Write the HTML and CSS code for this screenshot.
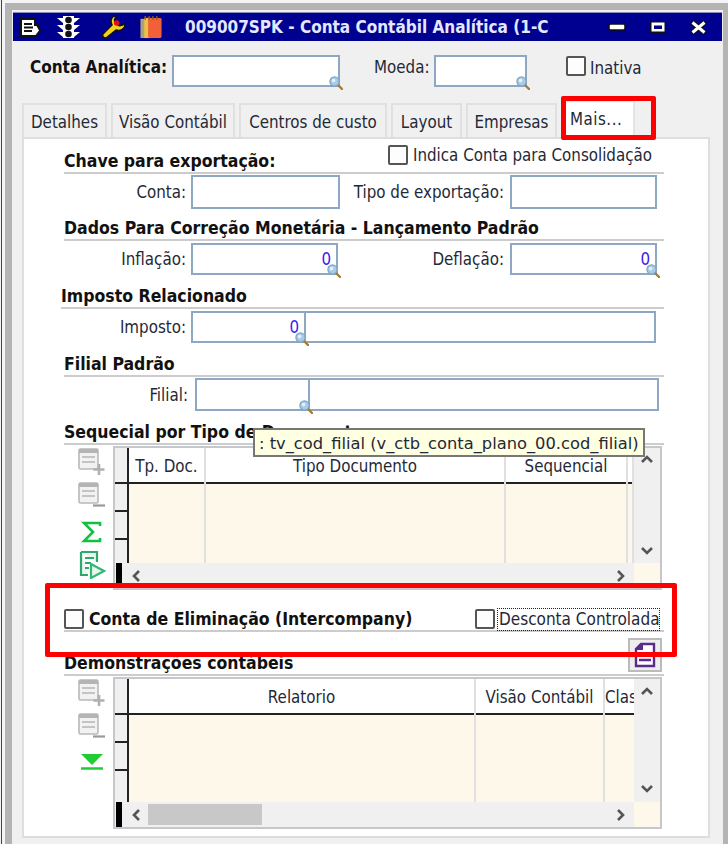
FILE: index.html
```html
<!DOCTYPE html>
<html lang="pt">
<head>
<meta charset="utf-8">
<title>Conta Contábil Analítica</title>
<link rel="stylesheet" href="styles.css">
</head>
<body>
<svg class="defs" width="0" height="0" aria-hidden="true">
  <symbol id="mag" viewBox="0 0 14 14">
    <path d="M8 8l5 5" stroke="#a67c32" stroke-width="2.4" stroke-linecap="round"/>
    <circle cx="5.5" cy="5.5" r="4.6" fill="#a9cbe8" stroke="#7ea3c4" stroke-width="1.2"/>
    <circle cx="4.6" cy="4.6" r="1.8" fill="#e4f1fb"/>
  </symbol>
  <symbol id="doc-add" viewBox="0 0 28 28">
    <rect x="1" y="1" width="19" height="20" rx="1.5" fill="#f2f2f2" stroke="#b9b9b9" stroke-width="1.6"/>
    <rect x="1" y="1" width="19" height="4" fill="#b4b4b4"/>
    <path d="M4 9h13M4 14h13" stroke="#c4c4c4" stroke-width="1.8"/>
    <path d="M21 16v11M15.500 21.500h11" stroke="#b0b0b0" stroke-width="2.6"/>
  </symbol>
  <symbol id="doc-del" viewBox="0 0 28 28">
    <rect x="1" y="1" width="19" height="20" rx="1.5" fill="#f2f2f2" stroke="#b9b9b9" stroke-width="1.6"/>
    <rect x="1" y="1" width="19" height="4" fill="#b4b4b4"/>
    <path d="M4 9h13M4 14h13" stroke="#c4c4c4" stroke-width="1.8"/>
    <path d="M15 23.500h12" stroke="#9a9a9a" stroke-width="2.2"/>
  </symbol>
</svg>
<div class="stage">
  <div class="shell">
    <div class="window">
      <header class="titlebar">
        <svg class="ti ti-export" viewBox="0 0 24 24"><path d="M2 3h16v6h2l3 6.500-5 6.500H2z" fill="#111"/><path d="M4 5h12v6h2.500l2.500 4.500-3.500 4.500H4z" fill="#fff"/><path d="M6 9h8M6 12.500h9M6 16h8" stroke="#111" stroke-width="1.8"/></svg>
        <svg class="ti ti-light" viewBox="0 0 25 24"><path d="M7 1h11v22H7zM1 3h6l0 5zM24 3h-6v5zM1 10h6v5zM24 10h-6v5zM1 17h6v5zM24 17h-6v5z" fill="#fff"/><circle cx="12.500" cy="5" r="3.300" fill="#111"/><circle cx="12.500" cy="12" r="3.300" fill="#111"/><circle cx="12.500" cy="19" r="3.300" fill="#111"/></svg>
        <svg class="ti ti-wrench" viewBox="0 0 25 24"><path d="M13 1c-3 2-4 6-2 9L2 19c-1 2 0 4 3 4l10-8c3 1 7 0 9-4l-1-2c-2 2-5 2-6 1l-3-3c-1-2 0-4 1-5z" fill="#f2d21a" stroke="#111" stroke-width="1.500"/><circle cx="15.700" cy="8" r="2.800" fill="#e01010"/></svg>
        <svg class="ti ti-book" viewBox="0 0 24 25"><rect x="1" y="4" width="7" height="20" fill="#a9a27c"/><rect x="5" y="3" width="7" height="21" fill="#f2c040"/><rect x="9" y="3" width="14" height="21" rx="1.500" fill="#f2603a"/><path d="M6 1v4M10 1v4M14 1v4M18 1v4" stroke="#8a5a20" stroke-width="1.500"/></svg>
        <span class="title-text">009007SPK - Conta Contábil Analítica (1-Conta</span>
        <svg class="wc wc-min" viewBox="0 0 18 8"><rect x="1" y="1" width="16" height="6" rx="1.500" fill="#fff" stroke="#111" stroke-width="1.500"/></svg>
        <svg class="wc wc-max" viewBox="0 0 18 14"><rect x="1" y="1" width="16" height="12" rx="1.500" fill="#111"/><rect x="2.500" y="2.500" width="13" height="9" fill="#fff"/><rect x="5" y="5.500" width="8" height="3.500" fill="#000090"/></svg>
        <svg class="wc wc-close" viewBox="0 0 17 15"><path d="M2 2l13 11M15 2L2 13" stroke="#111" stroke-width="5"/><path d="M2.500 2.500l12 10M14.500 2.500l-12 10" stroke="#fff" stroke-width="3"/></svg>
      </header>

      <div class="head">
        <span class="lbl-main">Conta Analítica:</span>
        <div class="inp inp-conta"><svg class="mag"><use href="#mag"/></svg></div>
        <span class="lbl lbl-moeda">Moeda:</span>
        <div class="inp inp-moeda"><svg class="mag"><use href="#mag"/></svg></div>
        <span class="cb cb-inativa"></span>
        <span class="lbl lbl-inativa">Inativa</span>
      </div>

      <nav class="tabs">
        <span class="tab tab-1">Detalhes</span>
        <span class="tab tab-2">Visão Contábil</span>
        <span class="tab tab-3">Centros de custo</span>
        <span class="tab tab-4">Layout</span>
        <span class="tab tab-5">Empresas</span>
        <span class="tab tab-6 active">Mais...</span>
      </nav>

      <main class="panel">
        <div class="sec-head h-35">
          <span class="sec-title">Chave para exportação:</span>
          <span class="check-inline"><span class="cb"></span><span class="lbl">Indica Conta para Consolidação</span></span>
        </div>
        <div class="row r-1">
          <span class="lbl rl w-122">Conta:</span>
          <div class="inp w-149"></div>
          <span class="lbl rl w-164">Tipo de exportação:</span>
          <div class="inp w-147"></div>
        </div>

        <div class="sec-head h-32"><span class="sec-title">Dados Para Correção Monetária - Lançamento Padrão</span></div>
        <div class="row r-2">
          <span class="lbl rl w-122">Inflação:</span>
          <div class="inp w-147 num"><span class="val">0</span><svg class="mag"><use href="#mag"/></svg></div>
          <span class="lbl rl w-166">Deflação:</span>
          <div class="inp w-147 num"><span class="val">0</span><svg class="mag"><use href="#mag"/></svg></div>
        </div>

        <div class="sec-head h-34 shift"><span class="sec-title">Imposto Relacionado</span></div>
        <div class="row r-2">
          <span class="lbl rl w-122">Imposto:</span>
          <div class="inp w-465 split"><div class="seg num"><span class="val">0</span><svg class="mag"><use href="#mag"/></svg></div></div>
        </div>

        <div class="sec-head h-34"><span class="sec-title">Filial Padrão</span></div>
        <div class="row r-3">
          <span class="lbl rl w-126">Filial:</span>
          <div class="inp w-464 split"><div class="seg"><svg class="mag"><use href="#mag"/></svg></div></div>
        </div>

        <div class="sec-head h-34"><span class="sec-title">Sequecial por Tipo de Documento</span></div>
        <div class="grid-row">
          <div class="tools">
            <svg class="tool"><use href="#doc-add"/></svg>
            <svg class="tool"><use href="#doc-del"/></svg>
            <svg class="tool tool-sum" viewBox="0 0 22 22"><path d="M19 5V2H3l9 9-9 9h16v-3" fill="none" stroke="#12c040" stroke-width="2.600"/></svg>
            <svg class="tool" viewBox="0 0 28 28"><path d="M3 1h16v10M10 24H3V1" fill="#e8f6ee" stroke="#2fa870" stroke-width="2.200"/><path d="M7 7h9M7 12h6M7 17h4" stroke="#2fa870" stroke-width="2"/><path d="M13 13l13 7-13 7z" fill="#e8f6ee" stroke="#33b878" stroke-width="2.200"/></svg>
          </div>
          <section class="grid g-seq">
            <div class="g-main">
              <div class="g-rowhead"><i></i><i></i><i></i><i class="last"></i></div>
              <div class="g-col c-77"><div class="g-th">Tp. Doc.</div><div class="g-td"></div></div>
              <div class="g-col c-300"><div class="g-th">Tipo Documento</div><div class="g-td"></div></div>
              <div class="g-col c-122"><div class="g-th">Sequencial</div><div class="g-td"></div></div>
              <div class="g-col c-rest"><div class="g-th"></div><div class="g-td"></div></div>
            </div>
            <div class="v-scroll"><svg class="chev" viewBox="0 0 14 10"><path d="M2 8l5-5 5 5" fill="none" stroke="#555" stroke-width="2.600"/></svg><svg class="chev" viewBox="0 0 14 10"><path d="M2 2l5 5 5-5" fill="none" stroke="#555" stroke-width="2.600"/></svg></div>
            <div class="h-scroll"><b class="blk"></b><svg class="chevh" viewBox="0 0 10 14"><path d="M8 2L3 7l5 5" fill="none" stroke="#555" stroke-width="2.600"/></svg><span class="track"></span><svg class="chevh chev-end" viewBox="0 0 10 14"><path d="M2 2l5 5-5 5" fill="none" stroke="#555" stroke-width="2.600"/></svg></div>
            <div class="corner"></div>
          </section>
        </div>

        <div class="elim-row">
          <span class="cb"></span>
          <span class="elim-text">Conta de Eliminação (Intercompany)</span>
          <span class="cb cb-desc"></span>
          <span class="lbl dotted">Desconta Controlada</span>
        </div>

        <div class="sec-head h-44">
          <span class="sec-title">Demonstrações contábeis</span>
          <span class="doc-btn"><svg viewBox="0 0 22 26"><path d="M7 2h13v22H2V7z" fill="#fff" stroke="#5a2d8a" stroke-width="2.400"/><path d="M1 8h8V1" fill="#5a2d8a"/><path d="M5 13h12M5 18h12" stroke="#5a2d8a" stroke-width="2.400"/></svg></span>
        </div>
        <div class="grid-row gr-2">
          <div class="tools tools-2">
            <svg class="tool"><use href="#doc-add"/></svg>
            <svg class="tool"><use href="#doc-del"/></svg>
            <svg class="tool tool-tri" viewBox="0 0 24 17"><path d="M1 1h22L12 12z" fill="#22cc33"/><path d="M1 15.500h22" stroke="#22cc33" stroke-width="2.500"/></svg>
          </div>
          <section class="grid g-dem">
            <div class="g-main">
              <div class="g-rowhead"><i></i><i></i><i></i><i class="last"></i></div>
              <div class="g-col c-347"><div class="g-th">Relatorio</div><div class="g-td"></div></div>
              <div class="g-col c-129"><div class="g-th">Visão Contábil</div><div class="g-td"></div></div>
              <div class="g-col c-29"><div class="g-th left">Classif</div><div class="g-td"></div></div>
            </div>
            <div class="v-scroll v-scroll-2"><svg class="chev" viewBox="0 0 14 10"><path d="M2 8l5-5 5 5" fill="none" stroke="#555" stroke-width="2.600"/></svg><svg class="chev" viewBox="0 0 14 10"><path d="M2 2l5 5 5-5" fill="none" stroke="#555" stroke-width="2.600"/></svg></div>
            <div class="h-scroll"><b class="blk"></b><svg class="chevh" viewBox="0 0 10 14"><path d="M8 2L3 7l5 5" fill="none" stroke="#555" stroke-width="2.600"/></svg><span class="track"><span class="thumb"></span></span><svg class="chevh chev-end" viewBox="0 0 10 14"><path d="M2 2l5 5-5 5" fill="none" stroke="#555" stroke-width="2.600"/></svg></div>
            <div class="corner"></div>
          </section>
        </div>
      </main>
    </div>
  </div>

  <div class="tooltip">: tv_cod_filial (v_ctb_conta_plano_00.cod_filial)</div>
  <div class="mark mark-tab"></div>
  <div class="mark mark-row"></div>
</div>
</body>
</html>
```
FILE: styles.css
```css
* { box-sizing: border-box; }
html, body { margin: 0; padding: 0; }
body { font-family: "DejaVu Sans Condensed", "DejaVu Sans", sans-serif; font-stretch: condensed; font-size: 16.8px; color: #1f2937; background: #f2f2f2; }
.defs { position: absolute; }

.stage { position: relative; width: 728px; height: 844px; overflow: hidden; }
.shell { margin-left: 1px; height: 844px; border-left: 1px solid #444; padding: 3px 0 0 3px; background: #f4f4f4; }
.window { height: 841px; border-style: solid; border-color: #b4b4b4; border-width: 7px 5px 0 7px; background: #f0f0f0; padding: 2px 1px 0; }

.titlebar { height: 29px; background: #000090; display: flex; align-items: center; border-top: 1px solid #8d8db8; }
.ti { flex: none; height: 24px; width: 24px; }
.ti-export { margin-left: 5px; }
.ti-light { margin-left: 14px; width: 25px; }
.ti-wrench { margin-left: 20px; width: 25px; }
.ti-book { margin-left: 13px; }
.title-text { margin-left: 22px; width: 364px; flex: none; overflow: hidden; white-space: nowrap; font-weight: 700; font-size: 17px; color: #e4e8ff; }
.wc { flex: none; }
.wc-min { margin-left: 59px; width: 18px; height: 8px; }
.wc-max { margin-left: 23px; width: 18px; height: 14px; }
.wc-close { margin-left: 23px; width: 17px; height: 15px; }

.head { display: flex; align-items: center; height: 32px; margin: 14px 0 16px; padding-left: 17px; }
.lbl-main { width: 142px; font-weight: 700; font-size: 17px; color: #111; margin-bottom: 8px; }
.lbl { white-space: nowrap; }
.lbl-moeda { margin: 0 0 9px 34px; width: 60px; }
.lbl-inativa { margin-bottom: 7px; }
.inp { position: relative; flex: none; height: 100%; background: #fff; border: 2px solid #8ea8c3; }
.inp-conta { width: 168px; }
.inp-moeda { width: 93px; }
.cb { display: inline-block; flex: none; width: 20px; height: 20px; background: #fdfdfd; border: 2px solid #555; border-radius: 2px; }
.cb-inativa { margin: 0 4px 10px 39px; }
.mag { position: absolute; right: -5px; bottom: -5px; width: 14px; height: 14px; }

.tabs { display: flex; height: 34px; margin-left: 9px; position: relative; z-index: 1; }
.tab { display: flex; align-items: center; justify-content: center; height: 34px; margin-right: 4px; padding-top: 2px; border: 2px solid #e0e0e0; border-bottom: 0; background: #f0f0f0; color: #1f2937; white-space: nowrap; }
.tab-1 { width: 85px; }
.tab-2 { width: 124px; }
.tab-3 { width: 148px; }
.tab-4 { width: 71px; }
.tab-5 { width: 91px; }
.tab-6 { width: 74px; }
.tab.active { background: #fff; height: 38px; margin-top: -3px; border-color: #e4e4e4; justify-content: flex-start; padding: 0 0 3px 7px; letter-spacing: 0.5px; }

.panel { width: 688px; height: 701px; margin-left: 9px; background: #fff; border: 2px solid #dedede; padding-left: 40px; }
.sec-head { display: flex; justify-content: space-between; align-items: flex-end; width: 600px; border-bottom: 2px solid #cccccc; }
.shift { margin-left: -3px; width: 603px; }
.sec-title { font-weight: 700; font-size: 17.5px; color: #111; white-space: nowrap; padding-bottom: 1.5px; }
.h-32 { height: 32px; }
.h-34 { height: 34px; }
.h-35 { height: 35px; }
.h-44 { height: 44px; }
.check-inline { display: flex; align-items: center; gap: 5px; margin-right: 12px; margin-bottom: 7px; }

.row { display: flex; align-items: center; }
.r-1 { height: 34px; margin-top: 1px; }
.r-2 { height: 32px; margin-top: 2px; }
.r-3 { height: 33px; margin-top: 1px; }
.rl { text-align: right; padding-right: 5px; flex: none; }
.w-122 { width: 127px; }
.w-126 { width: 131px; padding-right: 7px; }
.w-164 { width: 170px; padding-right: 6px; }
.w-166 { width: 172px; padding-right: 6px; }
.w-147 { width: 147px; }
.w-149 { width: 149px; }
.w-465 { width: 465px; }
.w-464 { width: 464px; }
.num { display: flex; align-items: center; justify-content: flex-end; padding-right: 5px; }
.val { color: #3a22e6; }
.split { display: flex; }
.seg { position: relative; width: 113px; height: 100%; border-right: 2px solid #8ea8c3; }

.grid-row { display: flex; margin-top: 1px; height: 144px; }
.gr-2 { height: 152px; }
.tools { flex: none; width: 49px; padding: 2px 0 0 14px; display: flex; flex-direction: column; }
.tool { display: block; width: 28px; height: 28px; margin-bottom: 6px; }
.tool-sum { width: 22px; height: 22px; margin: 5px 0 8px 3px; }
.tool-tri { width: 24px; height: 17px; margin: 6px 0 0 2px; }

.grid { flex: none; width: 549px; display: grid; grid-template-columns: 1fr 26px; grid-template-rows: 1fr 25px; border: 2px solid #c4c8cc; background: #fff; }
.g-main { display: flex; overflow: hidden; }
.g-rowhead { flex: none; width: 14px; display: flex; flex-direction: column; border-right: 2px solid #222; background: #f0f0f0; }
.g-rowhead i { display: block; height: 28px; border-bottom: 2px solid #222; }
.g-rowhead i:first-child { height: 36px; }
.g-rowhead i.last { flex: 1; border-bottom: 0; }
.g-col { flex: none; display: flex; flex-direction: column; overflow: hidden; border-right: 2px solid #e0e0e0; }
.g-th { flex: none; height: 36px; padding-top: 2px; background: #fff; border-bottom: 2px solid #222; display: flex; align-items: center; justify-content: center; white-space: nowrap; }
.g-th.left { justify-content: flex-start; }
.g-td { flex: 1; background: #fdf8e9; }
.c-77 { width: 77px; }
.c-300 { width: 300px; }
.c-122 { width: 122px; }
.c-rest { width: 6px; }
.c-347 { width: 347px; }
.c-129 { width: 129px; }
.c-29 { width: 29px; border-right: 0; }
.v-scroll { background: #f0f0f0; display: flex; flex-direction: column; justify-content: space-between; align-items: center; padding: 6px 0 7px; }
.v-scroll-2 { padding: 7px 0 8px; }
.chev { width: 14px; height: 10px; display: block; }
.h-scroll { display: flex; align-items: center; background: #f0f0f0; }
.blk { flex: none; width: 6px; height: 100%; background: #000; margin: 0 9px 0 1px; }
.chevh { flex: none; width: 10px; height: 14px; }
.chev-end { margin-right: 8px; }
.track { flex: 1; align-self: stretch; margin: 2px 5px 2px 7px; }
.thumb { display: block; width: 114px; height: 100%; background: #c8c8c8; }
.corner { background: #fdf8e9; }

.elim-row { display: flex; align-items: center; width: 600px; height: 42px; border-bottom: 2px solid #cccccc; padding-top: 18px; }
.elim-text { margin-left: 5px; width: 386px; font-weight: 700; font-size: 17.5px; color: #111; white-space: nowrap; }
.cb-desc { margin-right: 2px; }
.dotted { border: 1px dotted #222; width: 163px; height: 23px; line-height: 21px; padding-left: 1px; font-size: 17px; }

.doc-btn { width: 34px; height: 34px; margin: 0 2px 2px 0; background: #eeeeee; border: 2px solid #bbb; display: flex; align-items: center; justify-content: center; }
.doc-btn svg { width: 22px; height: 26px; }

.tooltip { position: absolute; z-index: 2; left: 253px; top: 428px; width: 392px; height: 29px; background: #ffffe1; border: 2px solid #777; line-height: 28px; padding-left: 4px; white-space: nowrap; overflow: hidden; color: #1f2937; font-family: "DejaVu Sans", sans-serif; font-stretch: normal; font-size: 16.3px; }
.mark { position: absolute; z-index: 3; border: 5px solid #ff0000; border-radius: 2px; }
.mark-tab { left: 561px; top: 96px; width: 95px; height: 44px; }
.mark-row { left: 45px; top: 583px; width: 632px; height: 74px; }
```
